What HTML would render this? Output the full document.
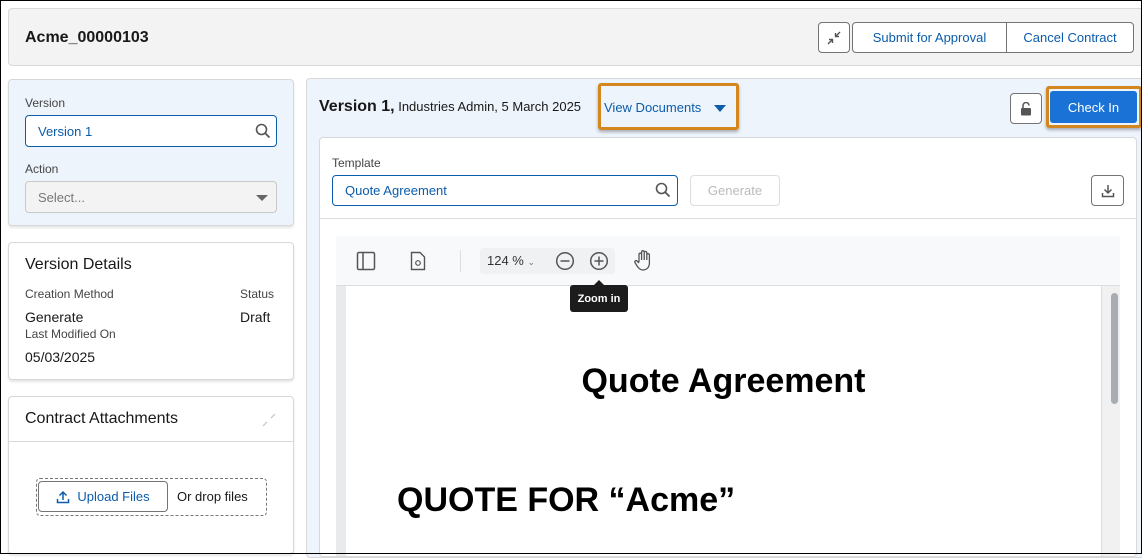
<!DOCTYPE html>
<html><head><style>
*{box-sizing:border-box;margin:0;padding:0}
body{width:1142px;height:554px;overflow:hidden;background:#fff;font-family:"Liberation Sans",sans-serif;color:#181818;position:relative;font-size:13px}
.a{position:absolute}
.frame{position:absolute;left:0;top:0;width:1142px;height:554px;border:1px solid #000;z-index:50;pointer-events:none}
.btn{position:absolute;border:1px solid #747474;border-radius:4px;background:#fff;color:#0b5cab;font-size:13px;display:flex;align-items:center;justify-content:center}
.card{position:absolute;background:#fff;border:1px solid #d8d8d8;border-radius:4px;box-shadow:0 2px 2px rgba(0,0,0,.1)}
.lbl{position:absolute;font-size:12px;color:#444}
</style></head><body>
<div class="frame"></div>
<div class="a" style="left:8px;top:8px;width:1140px;height:58px;background:#f3f3f3;border:1px solid #d8d8d8;border-radius:4px"></div>
<div class="a" style="left:25px;top:29px;font-size:16px;font-weight:bold">Acme_00000103</div>
<div class="btn" style="left:818px;top:22px;width:32px;height:31px"><svg width="14" height="14" viewBox="0 0 14 14"><path d="M1 13L5 9M2 8.5H5.5V12M13 1L9 5M12 5.5H8.5V2" stroke="#555" stroke-width="1.4" fill="none"/></svg></div>
<div class="btn" style="left:852px;top:22px;width:155px;height:31px;border-radius:4px 0 0 4px">Submit for Approval</div>
<div class="btn" style="left:1006px;top:22px;width:128px;height:31px;border-radius:0 4px 4px 0">Cancel Contract</div>
<div class="a" style="left:8px;top:79px;width:286px;height:147px;background:#eef4fc;border:1px solid #d8d8d8;border-radius:4px;box-shadow:0 2px 2px rgba(0,0,0,.1)"></div>
<div class="lbl" style="left:25px;top:96px">Version</div>
<div class="a" style="left:25px;top:115px;width:252px;height:32px;background:#fff;border:1px solid #0b5cab;border-radius:4px;padding:8px 12px;color:#0b5cab;font-size:13px">Version 1</div>
<svg class="a" style="left:255px;top:123px" width="16" height="16" viewBox="0 0 16 16"><circle cx="6.5" cy="6.5" r="5" stroke="#555" stroke-width="1.6" fill="none"/><path d="M10 10L14.5 14.5" stroke="#555" stroke-width="1.8"/></svg>
<div class="lbl" style="left:25px;top:162px">Action</div>
<div class="a" style="left:25px;top:181px;width:252px;height:32px;background:#f3f3f3;border:1px solid #c9c9c9;border-radius:4px;padding:8px 12px;color:#777;font-size:13px">Select...</div>
<div class="a" style="left:256px;top:195px;border-left:6px solid transparent;border-right:6px solid transparent;border-top:6px solid #666"></div>
<div class="card" style="left:8px;top:242px;width:286px;height:138px"></div>
<div class="a" style="left:25px;top:256px;font-size:16px">Version Details</div>
<div class="lbl" style="left:25px;top:287px">Creation Method</div>
<div class="lbl" style="left:240px;top:287px">Status</div>
<div class="a" style="left:25px;top:309px;font-size:14px">Generate</div>
<div class="a" style="left:240px;top:309px;font-size:14px">Draft</div>
<div class="lbl" style="left:25px;top:327px">Last Modified On</div>
<div class="a" style="left:25px;top:349px;font-size:14px">05/03/2025</div>
<div class="card" style="left:8px;top:396px;width:286px;height:158px"></div>
<div class="a" style="left:9px;top:441px;width:284px;height:1px;background:#d8d8d8"></div>
<div class="a" style="left:25px;top:410px;font-size:16px">Contract Attachments</div>
<svg class="a" style="left:262px;top:413px" width="14" height="14" viewBox="0 0 14 14"><path d="M1 13L5 9M13 1L9 5" stroke="#ccc" stroke-width="1.4"/></svg>
<div class="a" style="left:36px;top:478px;width:231px;height:38px;border:1px dashed #777;border-radius:4px"></div>
<div class="btn" style="left:38px;top:481px;width:130px;height:31px"><svg width="14" height="14" viewBox="0 0 14 14" style="margin-right:7px"><path d="M7 10V2M3.5 5.5L7 2L10.5 5.5M1.5 9V12.5H12.5V9" stroke="#0b5cab" stroke-width="1.5" fill="none"/></svg>Upload Files</div>
<div class="a" style="left:177px;top:489px;font-size:13px">Or drop files</div>
<div class="a" style="left:306px;top:78px;width:840px;height:480px;background:#eef4fc;border:1px solid #d8d8d8;border-radius:4px"></div>
<div class="a" style="left:319px;top:98px;font-size:16px;font-weight:bold">Version 1,<span style="font-weight:normal;font-size:13px"> Industries Admin, 5 March 2025</span></div>
<div class="a" style="left:598px;top:83px;width:141px;height:47px;border:3px solid #d4871e;border-radius:3px;box-shadow:0 2px 3px rgba(0,0,0,.3)"></div>
<div class="a" style="left:604px;top:100px;color:#0b5cab;font-size:13px">View Documents</div>
<div class="a" style="left:714px;top:105px;border-left:6px solid transparent;border-right:6px solid transparent;border-top:7px solid #0b5cab"></div>
<div class="btn" style="left:1010px;top:93px;width:32px;height:31px"><svg width="12" height="14" viewBox="0 0 12 14"><path d="M3 6V3.5A3 3 0 0 1 9 3.5" stroke="#555" stroke-width="1.5" fill="none"/><rect x="1" y="6" width="10" height="7.5" rx="1" fill="#555"/></svg></div>
<div class="a" style="left:1046px;top:86px;width:96px;height:42px;border:3px solid #d4871e;border-radius:3px;box-shadow:0 2px 3px rgba(0,0,0,.3)"></div>
<div class="a" style="left:1050px;top:91px;width:87px;height:32px;background:#1b72d6;border-radius:3px;color:#fff;font-size:13px;display:flex;align-items:center;justify-content:center">Check In</div>
<div class="a" style="left:319px;top:137px;width:818px;height:420px;background:#fff;border:1px solid #d8d8d8;border-radius:4px"></div>
<div class="lbl" style="left:332px;top:156px">Template</div>
<div class="a" style="left:332px;top:175px;width:346px;height:31px;border:1px solid #0b5cab;border-radius:4px;padding:7px 12px;color:#0b5cab;font-size:13px">Quote Agreement</div>
<svg class="a" style="left:655px;top:182px" width="16" height="16" viewBox="0 0 16 16"><circle cx="6.5" cy="6.5" r="5" stroke="#555" stroke-width="1.6" fill="none"/><path d="M10 10L14.5 14.5" stroke="#555" stroke-width="1.8"/></svg>
<div class="a" style="left:690px;top:175px;width:90px;height:31px;border:1px solid #ddd;border-radius:4px;color:#bbb;font-size:13px;display:flex;align-items:center;justify-content:center">Generate</div>
<div class="btn" style="left:1091px;top:175px;width:33px;height:31px"><svg width="14" height="14" viewBox="0 0 14 14"><path d="M7 1V9M3.5 5.5L7 9L10.5 5.5M1.5 9V12.5H12.5V9" stroke="#555" stroke-width="1.5" fill="none"/></svg></div>
<div class="a" style="left:320px;top:218px;width:816px;height:1px;background:#ddd"></div>
<div class="a" style="left:336px;top:236px;width:784px;height:50px;background:#f8f9fa;border-bottom:1px solid #ddd"></div>
<svg class="a" style="left:356px;top:251px" width="20" height="20" viewBox="0 0 20 20"><rect x="1.5" y="1.5" width="17" height="17" rx="1.5" stroke="#555" stroke-width="1.5" fill="none"/><path d="M7 2V18" stroke="#555" stroke-width="1.5"/></svg>
<svg class="a" style="left:410px;top:251px" width="16" height="20" viewBox="0 0 16 20"><path d="M1.5 1.5H10L14.5 6V18.5H1.5Z" stroke="#555" stroke-width="1.4" fill="none"/><circle cx="8" cy="12" r="2.3" stroke="#555" stroke-width="1.2" fill="none"/></svg>
<div class="a" style="left:460px;top:250px;width:1px;height:22px;background:#ddd"></div>
<div class="a" style="left:480px;top:248px;width:135px;height:26px;background:#f0f1f3;border-radius:3px"></div>
<div class="a" style="left:487px;top:253px;font-size:13px;color:#333">124 % <span style="font-size:9px;color:#777">⌄</span></div>
<svg class="a" style="left:555px;top:251px" width="20" height="20" viewBox="0 0 20 20"><circle cx="10" cy="10" r="8.3" stroke="#555" stroke-width="1.5" fill="none"/><path d="M5.5 10H14.5" stroke="#555" stroke-width="1.5"/></svg>
<svg class="a" style="left:589px;top:251px" width="20" height="20" viewBox="0 0 20 20"><circle cx="10" cy="10" r="8.3" stroke="#555" stroke-width="1.5" fill="none"/><path d="M5.5 10H14.5M10 5.5V14.5" stroke="#555" stroke-width="1.5"/></svg>
<svg class="a" style="left:633px;top:249px" width="22" height="24" viewBox="0 0 22 24"><path d="M6 13V5.5a1.3 1.3 0 0 1 2.6 0V11M8.6 11V3a1.3 1.3 0 0 1 2.6 0V11M11.2 11V3.8a1.3 1.3 0 0 1 2.6 0V11M13.8 11V6a1.3 1.3 0 0 1 2.6 0V14c0 4-2.5 7-6.5 7-2.5 0-4-1.5-5.5-3.5L2 13.5a1.3 1.3 0 0 1 2-1.6L6 14" stroke="#555" stroke-width="1.3" fill="none" stroke-linejoin="round"/></svg>
<div class="a" style="left:336px;top:286px;width:10px;height:270px;background:#e9eaec"></div>
<div class="a" style="left:1101px;top:286px;width:19px;height:270px;background:#f1f1f1;border-left:1px solid #ddd"></div>
<div class="a" style="left:1111px;top:293px;width:7px;height:111px;background:#a7adb2;border-radius:4px"></div>
<div class="a" style="left:570px;top:285px;width:58px;height:27px;background:#1c1c1c;border-radius:3px;color:#fff;font-size:11px;font-weight:bold;display:flex;align-items:center;justify-content:center">Zoom in</div>
<div class="a" style="left:594px;top:280px;border-left:5px solid transparent;border-right:5px solid transparent;border-bottom:5px solid #1c1c1c"></div>
<div class="a" style="left:346px;top:362px;width:755px;text-align:center;font-size:34px;font-weight:bold;color:#000">Quote Agreement</div>
<div class="a" style="left:397px;top:481px;font-size:34px;font-weight:bold;color:#000">QUOTE FOR “Acme”</div>
</body></html>
